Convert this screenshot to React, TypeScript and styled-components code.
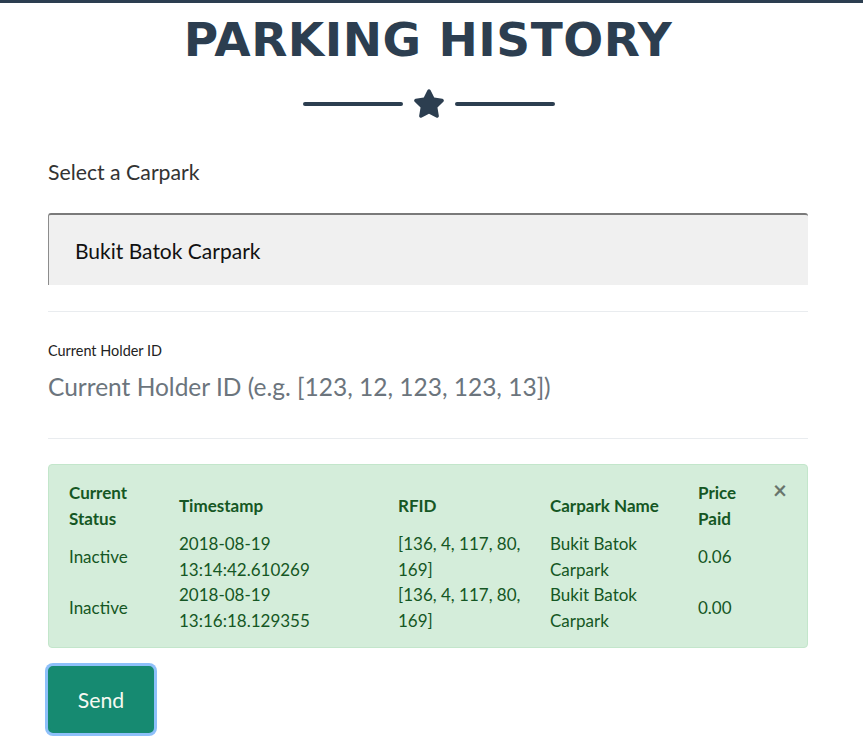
import React from "react";
import styled, { createGlobalStyle } from "styled-components";

const GlobalStyle = createGlobalStyle`
  html, body { margin: 0; padding: 0; background: #fff; }
  body { font-family: Lato, "Liberation Sans", sans-serif; color: #212529; }
  * { box-sizing: border-box; }
`;

const TopBar = styled.div`
  height: 3px;
  background: #2c3e50;
`;

const Page = styled.main`
  padding: 0 55px 40px 48px;
`;

const Header = styled.header`
  display: flex;
  flex-direction: column;
  align-items: center;
`;

const Title = styled.h2`
  margin: 9px 0 0;
  font-family: "DejaVu Sans", "Liberation Sans", sans-serif;
  font-weight: 700;
  font-size: 47px;
  line-height: 1.2;
  color: #2c3e50;
  text-transform: uppercase;
  letter-spacing: 0.5px;
`;

const Divider = styled.div`
  display: flex;
  align-items: center;
  gap: 10px;
  margin-top: 21px;
  margin-left: 1px;
`;

const DividerLine = styled.span`
  display: block;
  width: 100px;
  height: 4px;
  border-radius: 2px;
  background: #2c3e50;
`;

const SectionLabel = styled.div`
  margin-top: 38px;
  font-size: 21.25px;
  line-height: 32px;
  color: #333;
`;

const SelectBox = styled.div`
  margin-top: 25px;
  height: 72px;
  display: flex;
  align-items: center;
  padding-left: 26px;
  background: #f0f0f0;
  border-top: 2px solid #7a7a7a;
  border-left: 1px solid #8c8c8c;
  border-radius: 3px 3px 0 0;
  font-size: 21px;
  color: #111;
`;

const Rule = styled.hr`
  margin: 26px 0 0;
  border: 0;
  border-top: 1px solid #e9ecef;
  height: 0;
`;

const FieldGroup = styled.div`
  padding-top: 27px;
  padding-bottom: 31px;
  border-bottom: 1px solid #e9ecef;
`;

const FieldLabel = styled.div`
  font-size: 14.45px;
  line-height: 24px;
  color: #222;
`;

const FieldInput = styled.div`
  margin-top: 4px;
  font-size: 24.5px;
  line-height: 40px;
  color: #6c757d;
`;

const Alert = styled.div`
  position: relative;
  margin-top: 25px;
  padding: 15px 64px 14px 20px;
  background: #d4edda;
  border: 1px solid #c3e6cb;
  border-radius: 4px;
  color: #155724;
`;

const CloseButton = styled.span`
  position: absolute;
  top: 0;
  right: 0;
  padding: 13px 20px;
  font-size: 24px;
  font-weight: 700;
  line-height: 1;
  color: #000;
  opacity: 0.5;
`;

const Table = styled.table`
  width: 100%;
  border-collapse: collapse;
  table-layout: fixed;
  font-size: 17px;
  line-height: 1.5;
`;

const Th = styled.th<{ $w?: number }>`
  width: ${(p) => (p.$w ? `${p.$w}px` : "auto")};
  padding: 0 12px 0 0;
  text-align: left;
  vertical-align: middle;
  font-weight: 700;
`;

const Td = styled.td`
  padding: 0 12px 0 0;
  vertical-align: middle;
`;

const SendButton = styled.button`
  margin-top: 18px;
  width: 106px;
  height: 67px;
  font-family: Lato, "Liberation Sans", sans-serif;
  font-size: 21.25px;
  color: #f6f9f2;
  background: #168a71;
  border: 2px solid #168a71;
  border-radius: 5px;
  box-shadow: 0 0 0 3px #8ec0fa;
`;

const Star = () => (
  <svg width="32" height="29" viewBox="0 0 576 512" aria-hidden="true">
    <path
      fill="#2c3e50"
      d="M259.3 17.8L194 150.2 47.9 171.5c-26.2 3.8-36.7 36.1-17.7 54.6l105.7 103-25 145.5c-4.5 26.3 23.2 46 46.4 33.7L288 439.6l130.7 68.7c23.2 12.2 50.9-7.4 46.4-33.7l-25-145.5 105.7-103c19-18.5 8.5-50.8-17.7-54.6L382 150.2 316.7 17.8c-11.7-23.6-45.6-23.9-57.4 0z"
    />
  </svg>
);

const rows = [
  {
    status: "Inactive",
    ts: ["2018-08-19", "13:14:42.610269"],
    rfid: ["[136, 4, 117, 80,", "169]"],
    name: ["Bukit Batok", "Carpark"],
    price: "0.06",
  },
  {
    status: "Inactive",
    ts: ["2018-08-19", "13:16:18.129355"],
    rfid: ["[136, 4, 117, 80,", "169]"],
    name: ["Bukit Batok", "Carpark"],
    price: "0.00",
  },
];

export default function App() {
  return (
    <>
      <GlobalStyle />
      <TopBar />
      <Page>
        <Header>
          <Title>Parking History</Title>
          <Divider>
            <DividerLine />
            <Star />
            <DividerLine />
          </Divider>
        </Header>

        <SectionLabel>Select a Carpark</SectionLabel>
        <SelectBox>Bukit Batok Carpark</SelectBox>
        <Rule />

        <FieldGroup>
          <FieldLabel>Current Holder ID</FieldLabel>
          <FieldInput>Current Holder ID (e.g. [123, 12, 123, 123, 13])</FieldInput>
        </FieldGroup>

        <Alert>
          <Table>
            <thead>
              <tr>
                <Th $w={110}>Current Status</Th>
                <Th $w={219}>Timestamp</Th>
                <Th $w={152}>RFID</Th>
                <Th $w={148}>Carpark Name</Th>
                <Th>Price Paid</Th>
              </tr>
            </thead>
            <tbody>
              {rows.map((r, i) => (
                <tr key={i}>
                  <Td>{r.status}</Td>
                  <Td>
                    {r.ts[0]}
                    <br />
                    {r.ts[1]}
                  </Td>
                  <Td>
                    {r.rfid[0]}
                    <br />
                    {r.rfid[1]}
                  </Td>
                  <Td>
                    {r.name[0]}
                    <br />
                    {r.name[1]}
                  </Td>
                  <Td>{r.price}</Td>
                </tr>
              ))}
            </tbody>
          </Table>
          <CloseButton>×</CloseButton>
        </Alert>

        <SendButton>Send</SendButton>
      </Page>
    </>
  );
}
